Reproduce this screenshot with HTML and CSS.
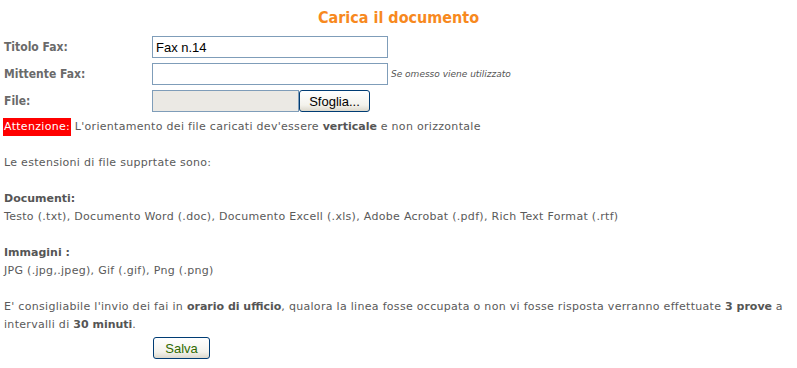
FILE: index.html
```html
<!DOCTYPE html>
<html lang="it">
  <head>
    <meta charset="UTF-8" />
    <title>Carica il documento</title>
    <link rel="stylesheet" href="styles.css">
  </head>
  <body>
    <div class="upload">
      <h1>Carica il documento</h1>
      <form id="faxForm">
        <div class="row">
          <label>Titolo Fax:</label>
          <input type="text" class="field" value="Fax n.14" />
        </div>
        <div class="row">
          <label>Mittente Fax:</label>
          <input type="text" class="field" />
          <span class="hint">Se omesso viene utilizzato</span>
        </div>
        <div class="row">
          <label>File:</label>
          <span class="file-box"></span>
          <button type="button" class="btn">Sfoglia...</button>
        </div>
        <div class="info">
          <p><span class="warn">Attenzione:</span> L'orientamento dei file caricati dev'essere <b>verticale</b> e non orizzontale</p>
          <p>Le estensioni di file supprtate sono:</p>
          <p><b>Documenti:</b><br>Testo (.txt), Documento Word (.doc), Documento Excell (.xls), Adobe Acrobat (.pdf), Rich Text Format (.rtf)</p>
          <p><b>Immagini :</b><br>JPG (.jpg,.jpeg), Gif (.gif), Png (.png)</p>
          <p>E' consigliabile l'invio dei fai in <b>orario di ufficio</b>, qualora la linea fosse occupata o non vi fosse risposta verranno effettuate <b>3 prove</b> a intervalli di <b>30 minuti</b>.</p>
        </div>
        <div class="actions">
          <button type="submit" class="btn save">Salva</button>
        </div>
      </form>
    </div>
  </body>
</html>
```

FILE: styles.css
```css
body {
  margin: 0;
  background: #fff;
  font-family: "DejaVu Sans", Verdana, sans-serif;
  font-size: 11px;
  color: #5a5a5a;
}

.upload {
  padding: 8px 4px 0 4px;
}

.upload h1 {
  margin: 0 0 9px 0;
  text-align: center;
  font-family: "DejaVu Sans Condensed", "DejaVu Sans", sans-serif;
  font-size: 16px;
  color: #f7891e;
  font-weight: bold;
}

.row {
  display: flex;
  align-items: center;
  height: 22px;
  margin-bottom: 5px;
}

.row label {
  width: 148px;
  font-family: "DejaVu Sans Condensed", "DejaVu Sans", sans-serif;
  font-weight: bold;
  color: #6a6a6a;
  font-size: 12px;
}

.field {
  box-sizing: border-box;
  width: 236px;
  height: 22px;
  margin: 0;
  padding: 1px 3px;
  border: 1px solid #7f9db9;
  font-family: "Liberation Sans", Arial, sans-serif;
  font-size: 13px;
  color: #000;
}

.hint {
  margin-left: 3px;
  font-size: 9px;
  font-style: italic;
  color: #555;
}

.file-box {
  box-sizing: border-box;
  width: 147px;
  height: 22px;
  border: 1px solid #7f9db9;
  background: #ebe9e4;
}

.btn {
  box-sizing: border-box;
  height: 22px;
  margin: 0;
  padding: 0 8px;
  border: 1px solid #003c74;
  border-radius: 3px;
  background: linear-gradient(#ffffff, #f3f2ec 70%, #dcd8cc);
  font-family: "Liberation Sans", Arial, sans-serif;
  font-size: 13px;
  color: #000;
}

.row .btn {
  width: 71px;
}

.info {
  padding-top: 1px;
  letter-spacing: 0.3px;
}

.info p {
  margin: 0 0 18px 0;
  line-height: 18px;
}

.info b {
  color: #555;
  letter-spacing: 0;
}

.warn {
  background: #ff0000;
  color: #fff;
  padding: 2px 1px 3px 1px;
  margin-left: -1px;
}

.actions {
  margin-top: -15px;
  padding-left: 149px;
}

.save {
  width: 57px;
  color: #2f6a00;
}
```
